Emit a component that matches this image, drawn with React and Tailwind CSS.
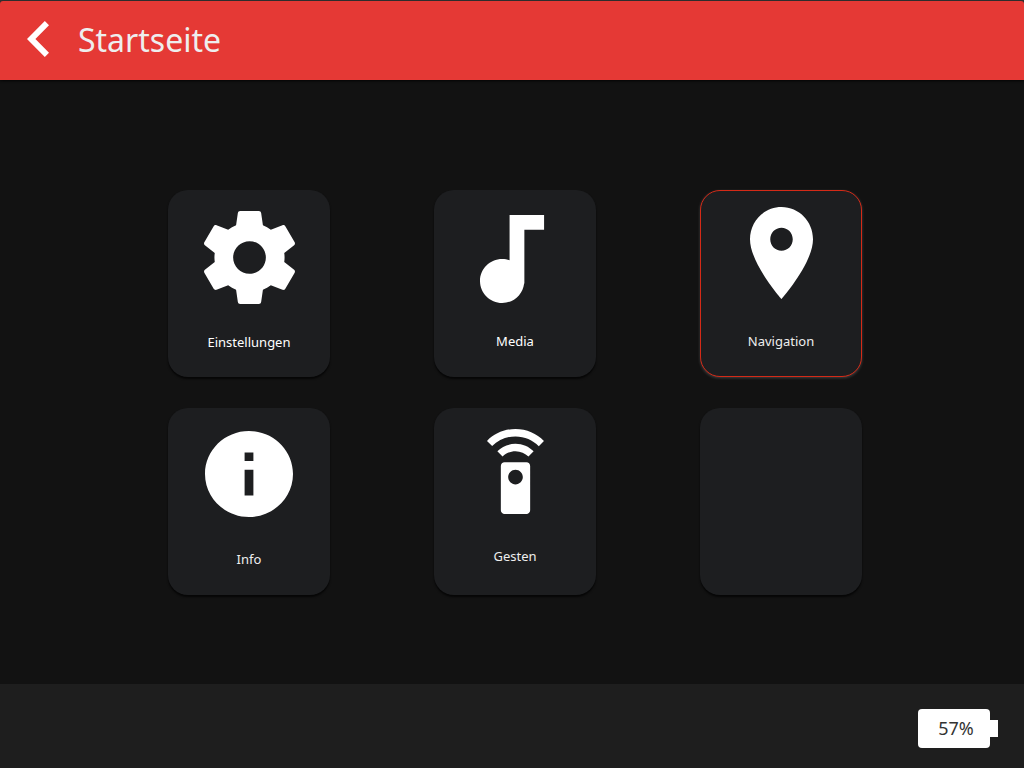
const tiles = [
  {
    label: 'Einstellungen',
    viewBox: '2.27 2 19.46 20',
    icon: 'w-[91px] h-[93px]',
    layout: 'pt-5 gap-7',
    tone: 'text-white',
    path: 'M19.43 12.98c.04-.32.07-.64.07-.98s-.03-.66-.07-.98l2.11-1.65c.19-.15.24-.42.12-.64l-2-3.46c-.12-.22-.39-.3-.61-.22l-2.49 1c-.52-.4-1.08-.73-1.69-.98l-.38-2.65C14.46 2.18 14.25 2 14 2h-4c-.25 0-.46.18-.49.42l-.38 2.65c-.61.25-1.17.59-1.69.98l-2.49-1c-.23-.09-.49 0-.61.22l-2 3.46c-.13.22-.07.49.12.64l2.11 1.65c-.04.32-.07.65-.07.98s.03.66.07.98l-2.11 1.65c-.19.15-.24.42-.12.64l2 3.46c.12.22.39.3.61.22l2.49-1c.52.4 1.08.73 1.69.98l.38 2.65c.03.24.24.42.49.42h4c.25 0 .46-.18.49-.42l.38-2.65c.61-.25 1.17-.59 1.69-.98l2.49 1c.23.09.49 0 .61-.22l2-3.46c.12-.22.07-.49-.12-.64l-2.11-1.65zM12 15.5c-1.93 0-3.5-1.57-3.5-3.5s1.57-3.5 3.5-3.5 3.5 1.57 3.5 3.5-1.57 3.5-3.5 3.5z',
  },
  {
    label: 'Media',
    viewBox: '6 3 14.2 18',
    icon: 'w-[70px] h-[88px]',
    layout: 'pt-6 gap-7',
    tone: 'text-white',
    path: 'M12 3v9.28c-.47-.17-.97-.28-1.5-.28C8.01 12 6 14.01 6 16.5S8.01 21 10.5 21c2.31 0 4.2-1.75 4.45-4H15V6h4V3h-7z',
  },
  {
    label: 'Navigation',
    viewBox: '5 2 14 20',
    icon: 'w-[63px] h-[92px]',
    layout: 'pt-4 gap-8',
    tone: 'text-[#eeeeee]',
    active: true,
    path: 'M12 2C8.13 2 5 5.13 5 9c0 5.25 7 13 7 13s7-7.75 7-13c0-3.87-3.13-7-7-7zm0 9.5c-1.38 0-2.5-1.12-2.5-2.5s1.12-2.5 2.5-2.5 2.5 1.12 2.5 2.5-1.12 2.5-2.5 2.5z',
  },
  {
    label: 'Info',
    viewBox: '2 2 20 20',
    icon: 'w-[88px] h-[86px]',
    layout: 'pt-5.5 gap-8',
    tone: 'text-[#eeeeee]',
    path: 'M12 2C6.48 2 2 6.48 2 12s4.48 10 10 10 10-4.48 10-10S17.52 2 12 2zm1 15h-2v-6h2v6zm0-8h-2V7h2v2z',
  },
  {
    label: 'Gesten',
    viewBox: '4.22 0 15.56 23',
    icon: 'w-[57px] h-[85px]',
    layout: 'pt-5 gap-8',
    tone: 'text-[#eeeeee]',
    path: 'M15 9H9c-.55 0-1 .45-1 1v12c0 .55.45 1 1 1h6c.55 0 1-.45 1-1V10c0-.55-.45-1-1-1zm-3 6c-1.1 0-2-.9-2-2s.9-2 2-2 2 .9 2 2-.9 2-2 2zM7.05 6.05l1.41 1.41C9.37 6.56 10.62 6 12 6s2.63.56 3.54 1.46l1.41-1.41C15.68 4.78 13.93 4 12 4s-3.68.78-4.95 2.05zM12 0C8.96 0 6.21 1.23 4.22 3.22l1.41 1.41C7.26 3.01 9.51 2 12 2s4.74 1.01 6.36 2.64l1.41-1.41C17.79 1.23 15.04 0 12 0z',
  },
];

const tileBase =
  'flex h-[187px] w-[162px] flex-col items-center rounded-[20px] border bg-[#1d1e20]';

function Tile({ tile }) {
  const frame = tile.active
    ? 'border-[#d42a17] shadow-[0_1px_3px_rgba(255,255,255,0.2)]'
    : 'border-transparent shadow-[0_2px_2px_rgba(0,0,0,0.7)]';
  return (
    <button type="button" className={`${tileBase} ${frame} ${tile.layout}`}>
      <svg
        className={`shrink-0 fill-white ${tile.icon}`}
        viewBox={tile.viewBox}
        preserveAspectRatio="none"
        aria-hidden="true"
      >
        <path d={tile.path} />
      </svg>
      <span className={`text-[13px] leading-5 ${tile.tone}`}>{tile.label}</span>
    </button>
  );
}

export default function App() {
  return (
    <div className="flex min-h-screen flex-col bg-[#121212] font-['Noto_Sans',sans-serif]">
      <div className="bg-[#333333] pt-px">
        <header className="flex h-[79px] items-center gap-[29px] rounded-t-[3px] bg-[#e53935] px-[27px] pb-0.5 shadow-[0_1px_3px_rgba(0,0,0,0.8)]">
          <button type="button" aria-label="Zurück" className="pb-0.5">
            <svg
              className="h-9 w-[22px] fill-white"
              viewBox="8 6 7.41 12"
              preserveAspectRatio="none"
              aria-hidden="true"
            >
              <path d="M15.41 7.41L14 6l-6 6 6 6 1.41-1.41L10.83 12z" />
            </svg>
          </button>
          <h1 className="text-[32px] leading-10 text-[#eeeeee]">Startseite</h1>
        </header>
      </div>

      <main className="flex flex-1 items-center justify-center pt-[21px] pl-[6px]">
        <div className="grid grid-cols-3 gap-x-[104px] gap-y-[31px]">
          {tiles.map((tile) => (
            <Tile key={tile.label} tile={tile} />
          ))}
          <div className={`${tileBase} border-transparent shadow-[0_2px_2px_rgba(0,0,0,0.7)]`} />
        </div>
      </main>

      <footer className="flex h-[84px] items-center justify-end bg-[#1e1e1e] px-[26px] pt-[5px]">
        <div className="flex items-center">
          <div className="flex h-[39px] w-[72px] items-center justify-center rounded-[4px] bg-white pb-0.5 pl-1 text-[18px] leading-6 text-[#333333]">
            57%
          </div>
          <div className="h-[17px] w-2 bg-white" />
        </div>
      </footer>
    </div>
  );
}
